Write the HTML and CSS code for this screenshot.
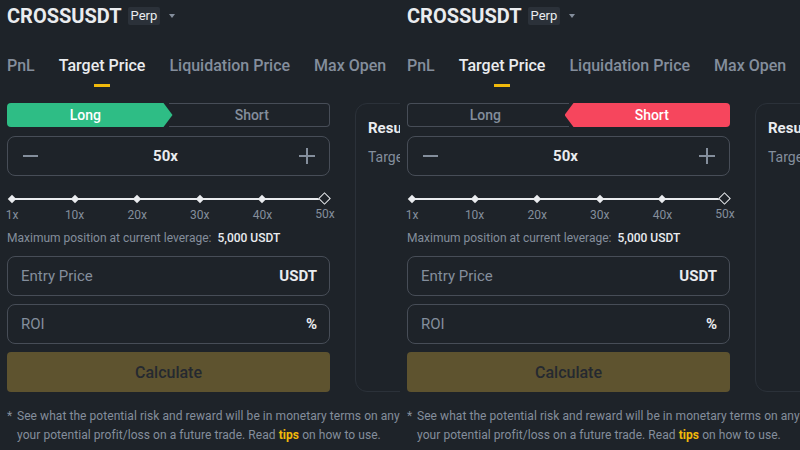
FILE: index.html
```html
<!DOCTYPE html>
<html>
<head>
<meta charset="utf-8">
<link rel="stylesheet" href="styles.css">
</head>
<body>
<div class="page">
  <section class="calc">
    <header class="head">
      <h1 class="symbol">CROSSUSDT</h1>
      <span class="badge">Perp</span>
      <span class="caret"></span>
    </header>
    <nav class="tabs">
      <span class="tab">PnL</span>
      <span class="tab active">Target Price</span>
      <span class="tab">Liquidation Price</span>
      <span class="tab">Max Open</span>
    </nav>
    <div class="body">
      <div class="form">
        <div class="toggle">
          <div class="side long on"><span>Long</span></div>
          <div class="side short"><span>Short</span></div>
        </div>
        <div class="lev">
          <span class="minus"></span>
          <span class="lev-val">50x</span>
          <span class="plus"></span>
        </div>
        <div class="slider">
          <div class="stop"><i class="dot"></i><span>1x</span></div>
          <div class="stop"><i class="dot"></i><span>10x</span></div>
          <div class="stop"><i class="dot"></i><span>20x</span></div>
          <div class="stop"><i class="dot"></i><span>30x</span></div>
          <div class="stop"><i class="dot"></i><span>40x</span></div>
          <div class="stop"><i class="dot end"></i><span>50x</span></div>
        </div>
        <p class="maxpos">Maximum position at current leverage: <b>5,000 USDT</b></p>
        <div class="field"><span class="label">Entry Price</span><span class="unit">USDT</span></div>
        <div class="field"><span class="label">ROI</span><span class="unit">%</span></div>
        <button class="calc-btn">Calculate</button>
      </div>
      <div class="result">
        <h2 class="res-title">Result</h2>
        <p class="res-line">Target Price</p>
      </div>
    </div>
    <p class="note"><span class="star">*</span><span class="note-text">See what the potential risk and reward will be in monetary terms on any given trade. Use our Futures Calculator to establish<br>your potential profit/loss on a future trade. Read <b class="tips">tips</b> on how to use.</span></p>
  </section>

  <section class="calc">
    <header class="head">
      <h1 class="symbol">CROSSUSDT</h1>
      <span class="badge">Perp</span>
      <span class="caret"></span>
    </header>
    <nav class="tabs">
      <span class="tab">PnL</span>
      <span class="tab active">Target Price</span>
      <span class="tab">Liquidation Price</span>
      <span class="tab">Max Open</span>
    </nav>
    <div class="body">
      <div class="form">
        <div class="toggle">
          <div class="side long"><span>Long</span></div>
          <div class="side short on"><span>Short</span></div>
        </div>
        <div class="lev">
          <span class="minus"></span>
          <span class="lev-val">50x</span>
          <span class="plus"></span>
        </div>
        <div class="slider">
          <div class="stop"><i class="dot"></i><span>1x</span></div>
          <div class="stop"><i class="dot"></i><span>10x</span></div>
          <div class="stop"><i class="dot"></i><span>20x</span></div>
          <div class="stop"><i class="dot"></i><span>30x</span></div>
          <div class="stop"><i class="dot"></i><span>40x</span></div>
          <div class="stop"><i class="dot end"></i><span>50x</span></div>
        </div>
        <p class="maxpos">Maximum position at current leverage: <b>5,000 USDT</b></p>
        <div class="field"><span class="label">Entry Price</span><span class="unit">USDT</span></div>
        <div class="field"><span class="label">ROI</span><span class="unit">%</span></div>
        <button class="calc-btn">Calculate</button>
      </div>
      <div class="result">
        <h2 class="res-title">Result</h2>
        <p class="res-line">Target Price</p>
      </div>
    </div>
    <p class="note"><span class="star">*</span><span class="note-text">See what the potential risk and reward will be in monetary terms on any given trade. Use our Futures Calculator to establish<br>your potential profit/loss on a future trade. Read <b class="tips">tips</b> on how to use.</span></p>
  </section>
</div>
</body>
</html>
```

FILE: styles.css
```css
* { box-sizing: border-box; }
html, body { margin: 0; padding: 0; }
body {
  background: #1e2329;
  font-family: Roboto, "Noto Sans", sans-serif;
  color: #eaecef;
  width: 800px;
  height: 450px;
  overflow: hidden;
}
.page { display: flex; }
.calc {
  flex: none;
  width: 400px;
  height: 450px;
  overflow: hidden;
  padding-left: 7px;
  background: #1e2329;
}
.head {
  display: flex;
  align-items: center;
  height: 34px;
  padding-bottom: 2px;
}
.symbol {
  margin: 0;
  font-size: 20px;
  font-weight: 700;
  color: #eaecef;
}
.badge {
  margin-left: 6px;
  background: #2b3139;
  color: #eaecef;
  font-size: 13px;
  line-height: 18px;
  padding: 0 3px;
  border-radius: 2px;
}
.caret {
  margin-left: 9px;
  width: 0;
  height: 0;
  border-left: 3px solid transparent;
  border-right: 3px solid transparent;
  border-top: 4px solid #848e9c;
}
.tabs {
  display: flex;
  gap: 24px;
  margin-top: 13px;
  height: 56px;
  white-space: nowrap;
}
.tab {
  font-size: 16px;
  font-weight: 500;
  color: #848e9c;
  line-height: 38px;
  height: 40px;
  position: relative;
}
.tab.active { color: #eaecef; }
.tab.active::after {
  content: "";
  position: absolute;
  left: 50%;
  bottom: 0;
  width: 16px;
  margin-left: -8px;
  height: 3px;
  background: #f0b90b;
}
.body {
  display: flex;
  align-items: flex-start;
}
.form {
  flex: none;
  width: 323px;
}
.toggle {
  display: flex;
  height: 24px;
}
.side {
  flex: 1;
  position: relative;
  display: flex;
  align-items: center;
  justify-content: center;
  font-size: 14px;
  font-weight: 500;
  color: #848e9c;
  border: 1px solid #474d57;
}
.side span { position: relative; z-index: 1; }
.side.long { border-right: none; border-radius: 4px 0 0 4px; padding-right: 6px; }
.side.short { border-left: none; border-radius: 0 4px 4px 0; padding-left: 6px; }
.side.on { color: #fff; border-color: transparent; }
.side.long.on::before {
  content: "";
  position: absolute;
  top: -1px; bottom: -1px; left: -1px; right: -4px;
  background: #2ebd85;
  border-radius: 4px 0 0 4px;
  clip-path: polygon(0 0, calc(100% - 9px) 0, 100% 50%, calc(100% - 9px) 100%, 0 100%);
}
.side.short.on::before {
  content: "";
  position: absolute;
  top: -1px; bottom: -1px; right: -1px; left: -4px;
  background: #f6465d;
  border-radius: 0 4px 4px 0;
  clip-path: polygon(9px 0, 100% 0, 100% 100%, 9px 100%, 0 50%);
}
.lev {
  margin-top: 9px;
  height: 40px;
  border: 1px solid #474d57;
  border-radius: 8px;
  display: flex;
  align-items: center;
  justify-content: space-between;
  padding: 0 14px 0 15px;
}
.minus {
  width: 15px;
  height: 2px;
  background: #848e9c;
}
.plus {
  width: 16px;
  height: 16px;
  position: relative;
}
.plus::before, .plus::after {
  content: "";
  position: absolute;
  background: #848e9c;
}
.plus::before { left: 0; right: 0; top: 7px; height: 2px; }
.plus::after { top: 0; bottom: 0; left: 7px; width: 2px; }
.lev-val {
  font-size: 15px;
  font-weight: 700;
  color: #eaecef;
  margin-right: 6px;
}
.slider {
  margin-top: 19px;
  position: relative;
  display: flex;
  justify-content: space-between;
  padding: 0 5px;
  height: 33px;
}
.slider::before {
  content: "";
  position: absolute;
  left: 5px; right: 5px;
  top: 3px;
  height: 1.5px;
  background: #eaecef;
}
.stop {
  width: 0;
  display: flex;
  flex-direction: column;
  align-items: center;
  position: relative;
}
.dot {
  display: block;
  width: 6px;
  height: 6px;
  margin-top: 1px;
  background: #eaecef;
  transform: rotate(45deg);
  flex: none;
}
.dot.end {
  width: 9px;
  height: 9px;
  margin-top: -1px;
  background: #1e2329;
  border: 1.5px solid #eaecef;
}
.stop span {
  margin-top: 6px;
  font-size: 12px;
  color: #848e9c;
  white-space: nowrap;
}
.dot.end + span { margin-top: 4px; }
.maxpos {
  margin: 1px 0 0;
  font-size: 12px;
  color: #848e9c;
  white-space: nowrap;
  line-height: 18px;
}
.maxpos b { color: #eaecef; font-weight: 500; margin-left: 3px; }
.field {
  margin-top: 9px;
  height: 40px;
  border: 1px solid #474d57;
  border-radius: 8px;
  display: flex;
  align-items: center;
  justify-content: space-between;
  padding: 0 12px 0 13px;
}
.field + .field { margin-top: 8px; }
.label { font-size: 15px; color: #848e9c; }
.unit { font-size: 15px; font-weight: 700; color: #eaecef; }
.calc-btn {
  display: block;
  width: 100%;
  margin-top: 8px;
  height: 40px;
  border: none;
  border-radius: 4px;
  background: #5e532f;
  color: #252930;
  font-family: inherit;
  font-size: 16px;
  font-weight: 500;
}
.result {
  flex: none;
  margin-left: 25px;
  width: 300px;
  height: 289px;
  border: 1px solid #2b3139;
  border-radius: 12px;
  padding: 14px 12px;
}
.res-title {
  margin: 0;
  font-size: 15px;
  font-weight: 700;
  color: #eaecef;
  line-height: 20px;
}
.res-line {
  margin: 11px 0 0;
  font-size: 14px;
  color: #848e9c;
}
.note {
  margin: 15px 0 0;
  display: flex;
  font-size: 12px;
  line-height: 19px;
  color: #848e9c;
  white-space: nowrap;
  letter-spacing: 0.06px;
}
.star { width: 10px; flex: none; }
.tips { color: #f0b90b; font-weight: 700; }
```
